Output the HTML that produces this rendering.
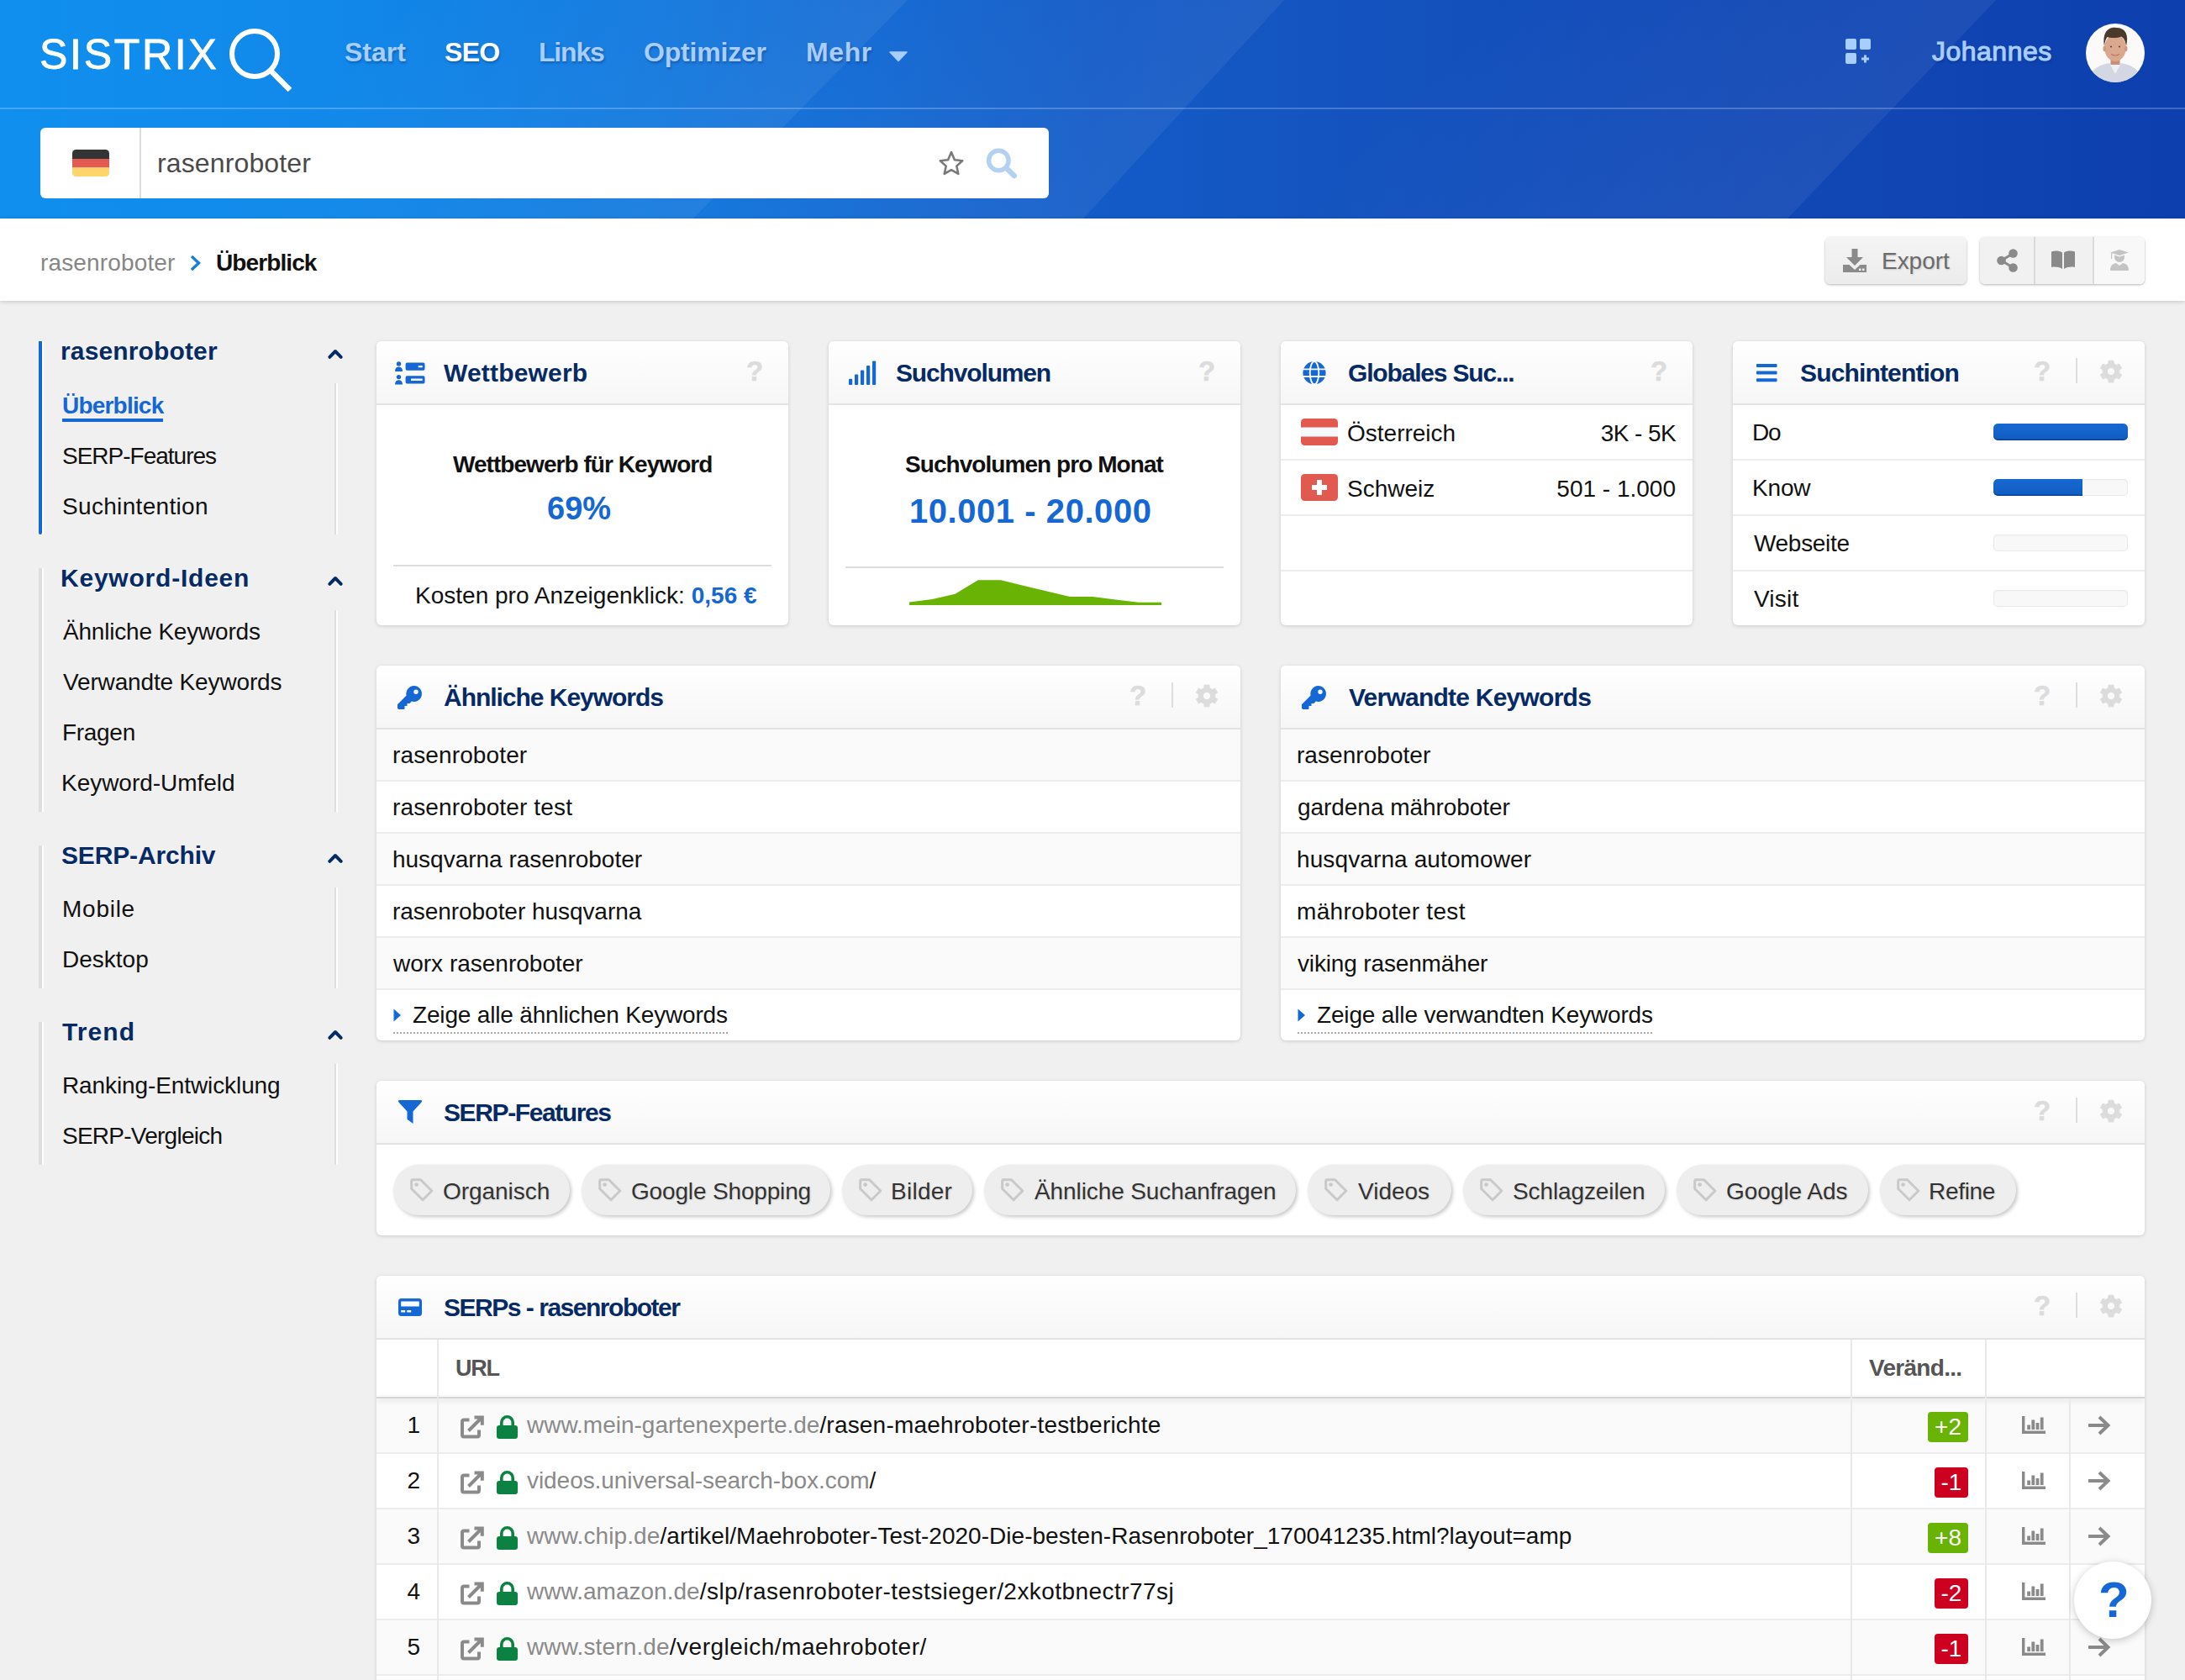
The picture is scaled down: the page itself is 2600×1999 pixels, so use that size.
<!DOCTYPE html>
<html lang="de">
<head>
<meta charset="utf-8">
<title>SISTRIX – rasenroboter – Überblick</title>
<style>
*{box-sizing:border-box;margin:0;padding:0}
html,body{width:2600px;height:1999px;overflow:hidden;background:#f0f0f0}
body{font-family:"Liberation Sans",sans-serif;font-size:28px;color:#111;position:relative}
.a{position:absolute}
.t{position:absolute;white-space:nowrap;line-height:1}
.b{font-weight:bold}
svg{position:absolute;overflow:visible}
/* header */
#hdr{left:0;top:0;width:2600px;height:260px;overflow:hidden;
 background:linear-gradient(90deg,#108fee 0%,#1189ea 15%,#1379de 30%,#1467d1 42%,#135bc7 50%,#1453bf 62%,#1249b6 80%,#0d3fae 100%)}
#hline{left:0;top:128px;width:2600px;height:2px;background:rgba(255,255,255,.22)}
.nav{font-weight:bold;font-size:32px;color:#a8cdff;text-shadow:1px 2px 3px rgba(0,30,90,.35)}
#sbox{left:48px;top:152px;width:1200px;height:84px;background:#fff;border-radius:6px}
#sdiv{left:166px;top:152px;width:2px;height:84px;background:#dcdcdc}
/* crumb */
#crumb{left:0;top:260px;width:2600px;height:98px;background:#fff;box-shadow:0 1px 5px rgba(0,0,0,.18)}
.btn{background:linear-gradient(#f4f4f4,#ececec);border-radius:6px;box-shadow:0 1px 3px rgba(0,0,0,.3)}
/* sidebar */
.sh{font-weight:bold;font-size:30px;color:#062a64;text-shadow:0 1px 0 #fff}
.si{font-size:28px;color:#111}
.gbar{left:46px;width:4px;background:#dedede;box-shadow:2px 0 0 #fff}
.rbar{left:398px;width:2px;background:#dedede;box-shadow:2px 0 0 #fff}
/* cards */
.card{position:absolute;background:#fff;border-radius:6px;box-shadow:0 1px 4px rgba(0,0,0,.16);overflow:hidden}
.ch{position:absolute;left:0;top:0;right:0;height:76px;background:linear-gradient(#ffffff,#f6f6f6);border-bottom:2px solid #e3e3e3}
.ct{font-weight:bold;font-size:30px;color:#062a64}
.q{font-weight:bold;font-size:33px;color:#dcdcdc;-webkit-text-stroke:.6px #dcdcdc}
.vd{width:2px;height:30px;background:#dddddd}
.row{position:absolute;left:0;right:0;border-bottom:2px solid #ececec}
.z{background:#fafafa}
.blue{color:#1567d3}
.dot{height:2px;background:repeating-linear-gradient(90deg,#a8a8a8 0,#a8a8a8 2px,transparent 2px,transparent 4px)}
.tag{height:60px;border-radius:30px;background:#eeeeee;box-shadow:2px 2px 4px rgba(0,0,0,.22);color:#333;text-shadow:1px 1px 2px rgba(0,0,0,.12)}
.bdg{height:36px;line-height:36px;padding:0;text-align:center;width:40px;border-radius:4px;color:#fff;font-size:28px}
.gr{background:#68b304;width:48px}.rd{background:#cd0020}
.bar{width:160px;height:20px;border-radius:5px;background:#f8f8f8;box-shadow:inset 0 0 0 1px #e9e9e9,inset 0 1px 2px rgba(0,0,0,.06);overflow:hidden}
.bar i{display:block;height:20px;background:linear-gradient(#1668d2,#115dc0);border-radius:5px;box-shadow:inset 0 -1.500px 0 rgba(0,40,120,.55)}
</style>
</head>
<body>

<svg width="0" height="0" style="left:0;top:0"><defs>
<symbol id="gear" viewBox="0 0 28 28"><path fill="#dcdcdc" stroke="#dcdcdc" stroke-width="1" stroke-linejoin="round" fill-rule="evenodd" d="M17.22 4.64 L16.97 1.14 L11.03 1.14 L10.78 4.64 L7.51 6.53 L4.35 5.00 L1.38 10.14 L4.28 12.11 L4.28 15.89 L1.38 17.86 L4.35 23.00 L7.51 21.47 L10.78 23.36 L11.03 26.86 L16.97 26.86 L17.22 23.36 L20.49 21.47 L23.65 23.00 L26.62 17.86 L23.72 15.89 L23.72 12.11 L26.62 10.14 L23.65 5.00 L20.49 6.53Z M9.40 14.00a4.6 4.6 0 1 0 9.2 0a4.6 4.6 0 1 0 -9.2 0z"/></symbol>
</defs></svg>
<!-- ================= HEADER ================= -->
<div id="hdr" class="a">
 <svg width="2600" height="260" viewBox="0 0 2600 260" style="left:0;top:0">
  <defs><linearGradient id="g1" gradientUnits="userSpaceOnUse" x1="480" y1="0" x2="792" y2="300"><stop offset="0" stop-color="#fff" stop-opacity="0"/><stop offset="1" stop-color="#fff" stop-opacity=".06"/></linearGradient><linearGradient id="g2" gradientUnits="userSpaceOnUse" x1="928" y1="0" x2="1240" y2="300"><stop offset="0" stop-color="#fff" stop-opacity="0"/><stop offset="1" stop-color="#fff" stop-opacity=".06"/></linearGradient><linearGradient id="g3" gradientUnits="userSpaceOnUse" x1="1775" y1="0" x2="2087" y2="300"><stop offset="0" stop-color="#fff" stop-opacity="0"/><stop offset="1" stop-color="#fff" stop-opacity=".06"/></linearGradient></defs>
  <polygon points="480,0 1080,0 825,260 225,260" fill="url(#g1)"/>
  <polygon points="928,0 1528,0 1289,260 689,260" fill="url(#g2)"/>
  <polygon points="1775,0 2375,0 2127,260 1527,260" fill="url(#g3)"/>
 </svg>
 <div id="hline" class="a"></div>
 <!-- logo -->
 <div class="t" id="logo" style="left:47px;top:40px;font-size:50px;color:#fff;letter-spacing:2.7px;-webkit-text-stroke:0.9px #fff">SISTRIX</div>
 <svg width="80" height="80" viewBox="0 0 80 80" style="left:270px;top:31px">
  <circle cx="33" cy="33" r="27" fill="none" stroke="#fff" stroke-width="6"/>
  <path d="M52 53 L75 76" stroke="#fff" stroke-width="6.5" fill="none"/>
 </svg>
 <!-- nav -->
 <div class="t nav" id="n1" style="left:410px;top:46px">Start</div>
 <div class="t nav" id="n2" style="left:529px;top:46px;color:#fff;letter-spacing:-0.7px">SEO</div>
 <div class="t nav" id="n3" style="left:641px;top:46px;letter-spacing:-1.2px">Links</div>
 <div class="t nav" id="n4" style="left:766px;top:46px;letter-spacing:-0.19px">Optimizer</div>
 <div class="t nav" id="n5" style="left:959px;top:46px;letter-spacing:0.6px">Mehr</div>
 <svg width="22" height="12" viewBox="0 0 22 12" style="left:1058px;top:61px"><path d="M1 1 H21 L11 11.5 Z" fill="#a8cdff" stroke="#a8cdff" stroke-width="1.5" stroke-linejoin="round"/></svg>
 <!-- right -->
 <svg width="30" height="30" viewBox="0 0 30 30" style="left:2196px;top:46px" fill="#a8cdff">
  <rect x="0" y="0" width="13" height="13" rx="2"/><rect x="17" y="0" width="13" height="13" rx="2"/><rect x="0" y="17" width="13" height="13" rx="2"/>
  <path d="M22 19.5h3v3h3v3h-3v3h-3v-3h-3v-3h3z"/>
 </svg>
 <div class="t nav" id="n6" style="left:2299px;top:45px;font-size:32px;letter-spacing:0.49px;font-weight:normal;-webkit-text-stroke:1.100px #a8cdff">Johannes</div>
 <!-- avatar -->
 <svg width="70" height="70" viewBox="0 0 70 70" style="left:2482px;top:28px">
  <defs><clipPath id="av"><circle cx="35" cy="35" r="35"/></clipPath></defs>
  <g clip-path="url(#av)">
   <rect width="70" height="70" fill="#fbfaf9"/>
   <path d="M3 70 C5 53 18 49 28 47 L35 52 L42 47 C52 49 65 53 67 70 Z" fill="#d3d7e3"/>
   <path d="M28 47 L35 60 L42 47 L38 44 H32 Z" fill="#eef0f5"/>
   <rect x="29.500" y="40" width="11" height="9" fill="#c99079"/>
   <ellipse cx="35" cy="29" rx="12.800" ry="16" fill="#d9a88f"/>
   <ellipse cx="22.300" cy="30" rx="1.800" ry="3.200" fill="#cf9a82"/><ellipse cx="47.700" cy="30" rx="1.800" ry="3.200" fill="#cf9a82"/>
   <path d="M22 27 C19 8 29 4 36 5 C47 5 51.500 13 48 27 C47 20 45 17 42 15.500 C37 18 28 17 25.500 16 C23.500 19 22.500 22 22 27 Z" fill="#4b392c"/>
   <path d="M30 36.500 Q35 39.500 40 36.500" fill="none" stroke="#b67763" stroke-width="1.200"/>
   <circle cx="30" cy="27.500" r="1.100" fill="#5a4a44"/><circle cx="40" cy="27.500" r="1.100" fill="#5a4a44"/>
  </g>
 </svg>
 <!-- search box -->
 <div id="sbox" class="a"></div>
 <div id="sdiv" class="a"></div>
 <svg width="44" height="32" viewBox="0 0 44 32" style="left:86px;top:178px">
  <defs><clipPath id="fde"><rect width="44" height="32" rx="4.500"/></clipPath></defs>
  <g clip-path="url(#fde)"><rect width="44" height="11" fill="#343434"/><rect y="11" width="44" height="10.500" fill="#e35a50"/><rect y="21.500" width="44" height="10.500" fill="#fdd56b"/></g>
 </svg>
 <div class="t" id="sq" style="left:187px;top:178px;font-size:32px;color:#4a4a4a;letter-spacing:0.13px">rasenroboter</div>
 <svg width="30" height="29" viewBox="0 0 30 29" style="left:1117px;top:180px"><path d="M15 1 L18.900 10.300 L28.200 11.300 L21.300 17.600 L23.300 26.900 L15 22.200 L6.700 26.900 L8.700 17.600 L1.800 11.300 L11.100 10.300 Z" fill="none" stroke="#7a7a7a" stroke-width="2.600" stroke-linejoin="round"/></svg>
 <svg width="38" height="38" viewBox="0 0 38 38" style="left:1173px;top:176px"><circle cx="15.300" cy="15" r="11.800" fill="none" stroke="#b5d1f2" stroke-width="5.400"/><path d="M24.500 24 L33.700 33" stroke="#b5d1f2" stroke-width="6.500" stroke-linecap="round"/></svg>
</div>

<!-- ================= BREADCRUMB BAR ================= -->
<div id="crumb" class="a"></div>
<div class="t" id="c1" style="left:48px;top:299px;color:#868686;letter-spacing:0.15px">rasenroboter</div>
<svg width="14" height="20" viewBox="0 0 14 20" style="left:226px;top:303px"><path d="M2 2 L10.500 10 L2 18" fill="none" stroke="#1a7fd4" stroke-width="3.400"/></svg>
<div class="t b" id="c2" style="left:257px;top:299px;color:#111;letter-spacing:-0.9px">Überblick</div>
<div class="a btn" style="left:2172px;top:282px;width:168px;height:56px"></div>
<svg width="28" height="28" viewBox="0 0 28 28" style="left:2193px;top:296px" fill="#8a8a8a">
 <path d="M10.500 0h7v10h6.500L14 20 4 10h6.500z"/><path d="M0 19h7.500l6.500 6 6.500-6H28v9H0z"/><rect x="19" y="23.500" width="2.500" height="2.500" fill="#f0f0f0"/><rect x="23" y="23.500" width="2.500" height="2.500" fill="#f0f0f0"/>
</svg>
<div class="t" id="c3" style="left:2239px;top:297px;color:#6b6b6b;text-shadow:1px 1px 2px rgba(0,0,0,.15);letter-spacing:-0.04px">Export</div>
<div class="a btn" style="left:2356px;top:282px;width:196px;height:56px;background:linear-gradient(90deg,#f1f1f1 0,#f1f1f1 134px,#f8f8f8 134px)"></div>
<div class="a" style="left:2420px;top:282px;width:2px;height:56px;background:#dadada"></div>
<div class="a" style="left:2490px;top:282px;width:2px;height:56px;background:#dadada"></div>
<svg width="25" height="28" viewBox="0 0 25 28" style="left:2376px;top:296px"><path d="M5.500 14 L19.500 5.500 M5.500 14 L19.500 22.500" stroke="#8a8a8a" stroke-width="3.200"/><circle cx="5.500" cy="14" r="5.300" fill="#8a8a8a"/><circle cx="19.500" cy="5.500" r="5.300" fill="#8a8a8a"/><circle cx="19.500" cy="22.500" r="5.300" fill="#8a8a8a"/></svg>
<svg width="28" height="22" viewBox="0 0 28 22" style="left:2441px;top:298px" fill="#8a8a8a"><path d="M0 1.500 C4 0 9 0 13 2.500 V22 C9 19.500 4 19 0 20 Z"/><path d="M28 1.500 C24 0 19 0 15 2.500 V22 C19 19.500 24 19 28 20 Z"/></svg>
<svg width="22" height="25" viewBox="0 0 22 25" style="left:2511px;top:297px" fill="#c4c4c4"><path d="M11 0 L22 3.500 L11 7 L0 3.500 Z"/><path d="M5 6.500 V9 a6 6 0 0 0 12 0 V6.500 L11 8.500 Z"/><path d="M0 25 C0 18 4 16.500 7 16 L11 19 L15 16 C18 16.500 22 18 22 25 Z"/><rect x="1" y="4" width="1.200" height="7"/></svg>

<!-- ================= SIDEBAR ================= -->
<div class="a" style="left:46px;top:406px;width:4px;height:230px;background:#1567d3;border-radius:0 0 2px 2px;box-shadow:2px 0 0 #fff"></div>
<div class="a rbar" style="top:456px;height:180px"></div>
<div class="t sh" id="s1" style="left:72px;top:403px;letter-spacing:0.14px">rasenroboter</div>
<div class="t b" id="s2" style="left:74px;top:469px;color:#1567d3;letter-spacing:-0.8px">Überblick</div>
<div class="a" style="left:74px;top:498px;width:120px;height:4px;background:#1567d3"></div>
<div class="t si" id="s3" style="left:74px;top:529px;letter-spacing:-1px">SERP-Features</div>
<div class="t si" id="s4" style="left:74px;top:589px;letter-spacing:0.32px">Suchintention</div>

<div class="a gbar" style="top:676px;height:290px"></div>
<div class="a rbar" style="top:726px;height:240px"></div>
<div class="t sh" id="s5" style="left:72px;top:673px;letter-spacing:0.78px">Keyword-Ideen</div>
<div class="t si" id="s6" style="left:75px;top:738px;letter-spacing:-0.2px">Ähnliche Keywords</div>
<div class="t si" id="s7" style="left:75px;top:798px;letter-spacing:-0.15px">Verwandte Keywords</div>
<div class="t si" id="s8" style="left:74px;top:858px;letter-spacing:-0.3px">Fragen</div>
<div class="t si" id="s9" style="left:73px;top:918px;letter-spacing:-0.03px">Keyword-Umfeld</div>

<div class="a gbar" style="top:1006px;height:170px"></div>
<div class="a rbar" style="top:1056px;height:120px"></div>
<div class="t sh" id="s10" style="left:73px;top:1003px;letter-spacing:-0.15px">SERP-Archiv</div>
<div class="t si" id="s11" style="left:74px;top:1068px;letter-spacing:0.74px">Mobile</div>
<div class="t si" id="s12" style="left:74px;top:1128px">Desktop</div>

<div class="a gbar" style="top:1216px;height:170px"></div>
<div class="a rbar" style="top:1266px;height:120px"></div>
<div class="t sh" id="s13" style="left:74px;top:1213px;letter-spacing:1.1px">Trend</div>
<div class="t si" id="s14" style="left:74px;top:1278px;letter-spacing:-0.1px">Ranking-Entwicklung</div>
<div class="t si" id="s15" style="left:74px;top:1338px;letter-spacing:-0.75px">SERP-Vergleich</div>

<svg width="18" height="12" viewBox="0 0 18 12" style="left:390px;top:415px"><path d="M2.300 11.200 L9 4.500 L15.700 11.200" fill="none" stroke="#fff" stroke-width="4" stroke-linecap="round" stroke-linejoin="round"/><path d="M2.300 9.800 L9 3 L15.700 9.800" fill="none" stroke="#062a64" stroke-width="4" stroke-linecap="round" stroke-linejoin="round"/></svg>
<svg width="18" height="12" viewBox="0 0 18 12" style="left:390px;top:685px"><path d="M2.300 11.200 L9 4.500 L15.700 11.200" fill="none" stroke="#fff" stroke-width="4" stroke-linecap="round" stroke-linejoin="round"/><path d="M2.300 9.800 L9 3 L15.700 9.800" fill="none" stroke="#062a64" stroke-width="4" stroke-linecap="round" stroke-linejoin="round"/></svg>
<svg width="18" height="12" viewBox="0 0 18 12" style="left:390px;top:1015px"><path d="M2.300 11.200 L9 4.500 L15.700 11.200" fill="none" stroke="#fff" stroke-width="4" stroke-linecap="round" stroke-linejoin="round"/><path d="M2.300 9.800 L9 3 L15.700 9.800" fill="none" stroke="#062a64" stroke-width="4" stroke-linecap="round" stroke-linejoin="round"/></svg>
<svg width="18" height="12" viewBox="0 0 18 12" style="left:390px;top:1225px"><path d="M2.300 11.200 L9 4.500 L15.700 11.200" fill="none" stroke="#fff" stroke-width="4" stroke-linecap="round" stroke-linejoin="round"/><path d="M2.300 9.800 L9 3 L15.700 9.800" fill="none" stroke="#062a64" stroke-width="4" stroke-linecap="round" stroke-linejoin="round"/></svg>

<!-- ===== Card 1: Wettbewerb ===== -->
<div class="card" style="left:448px;top:406px;width:490px;height:338px">
 <div class="ch"></div>
 <svg width="36" height="29" viewBox="0 0 36 29" style="left:22px;top:23.500px" fill="#1567d3">
  <circle cx="4.500" cy="2.900" r="2.700"/><path d="M0 11.900C0 8.300 2 6.500 4.500 6.500S9 8.300 9 11.900z"/>
  <circle cx="4.500" cy="18.600" r="2.700"/><path d="M0 27.600C0 24 2 22.200 4.500 22.200S9 24 9 27.600z"/>
  <path d="M14.300 1.600h19.500a1.700 1.700 0 0 1 1.700 1.700v5.800a1.700 1.700 0 0 1-1.700 1.700H14.300a1.700 1.700 0 0 1-1.700-1.700V3.300a1.700 1.700 0 0 1 1.700-1.700z M27.700 4.900v2.400h5V4.900z" fill-rule="evenodd"/>
  <path d="M14.300 17.200h19.500a1.700 1.700 0 0 1 1.700 1.700v5.800a1.700 1.700 0 0 1-1.700 1.700H14.300a1.700 1.700 0 0 1-1.700-1.700v-5.800a1.700 1.700 0 0 1 1.700-1.700z M19 20.600v2.400h13.700v-2.400z" fill-rule="evenodd"/>
 </svg>
 <div class="t ct" id="k1" style="left:80px;top:23px;letter-spacing:0.19px">Wettbewerb</div>
 <div class="t q" id="q1" style="left:440px;top:18.500px">?</div>
 <div class="t b" id="k1a" style="left:91px;top:133px;letter-spacing:-0.95px">Wettbewerb für Keyword</div>
 <div class="t b blue" id="k1b" style="left:203px;top:180px;font-size:38px">69%</div>
 <div class="a" style="left:20px;top:266px;width:450px;height:2px;background:#dcdcdc"></div>
 <div class="t" id="k1c" style="left:46px;top:289px;letter-spacing:0.01px">Kosten pro Anzeigenklick: <span class="b blue" id="k1d">0,56 €</span></div>
</div>

<!-- ===== Card 2: Suchvolumen ===== -->
<div class="card" style="left:986px;top:406px;width:490px;height:338px">
 <div class="ch"></div>
 <svg width="33" height="28" viewBox="0 0 33 28" style="left:24px;top:24px" fill="#1567d3">
  <rect x="0" y="20.700" width="4.200" height="7.300" rx="1"/><rect x="7" y="15.400" width="4.200" height="12.600" rx="1"/><rect x="14" y="10.400" width="4.200" height="17.600" rx="1"/><rect x="21" y="5.100" width="4.200" height="22.900" rx="1"/><rect x="28" y="-0.400" width="4.200" height="28.400" rx="1"/>
 </svg>
 <div class="t ct" id="k2" style="left:80px;top:23px;letter-spacing:-1.15px">Suchvolumen</div>
 <div class="t q" id="q2" style="left:440px;top:18.500px">?</div>
 <div class="t b" id="k2a" style="left:91px;top:133px;letter-spacing:-0.94px">Suchvolumen pro Monat</div>
 <div class="t b blue" id="k2b" style="left:96px;top:182px;font-size:40px;letter-spacing:0.55px">10.001 - 20.000</div>
 <div class="a" style="left:20px;top:268px;width:450px;height:2px;background:#dcdcdc"></div>
 <svg width="300" height="30" viewBox="0 0 300 30" style="left:96px;top:284px"><path d="M0 30 V26.400 L27.300 23 L54.500 16.700 L81.800 0.300 H109 L136.400 7 L163.600 13.500 L190.900 20 H218.200 L245.500 23.400 L272.700 26.700 H300 V30 Z" fill="#68b304"/></svg>
</div>

<!-- ===== Card 3: Globales Suchvolumen ===== -->
<div class="card" style="left:1524px;top:406px;width:490px;height:338px">
 <div class="ch"></div>
 <svg width="28" height="28" viewBox="0 0 28 28" style="left:26px;top:24px">
  <circle cx="14" cy="13.700" r="13.600" fill="#1567d3"/>
  <g fill="none" stroke="#fafafa" stroke-width="1.900"><ellipse cx="14" cy="13.700" rx="5.300" ry="13.600"/><path d="M0 9.400H28M0 18H28"/></g>
 </svg>
 <div class="t ct" id="k3" style="left:80px;top:23px;letter-spacing:-1.17px">Globales Suc...</div>
 <div class="t q" id="q3" style="left:440px;top:18.500px">?</div>
 <div class="row" style="top:76px;height:66px"></div>
 <div class="row" style="top:142px;height:66px"></div>
 <div class="row" style="top:208px;height:66px"></div>
 <svg width="44" height="32" viewBox="0 0 44 32" style="left:24px;top:92px"><defs><clipPath id="fat"><rect width="44" height="32" rx="4.500"/></clipPath></defs><g clip-path="url(#fat)"><rect width="44" height="32" fill="#e25950"/><rect y="10.500" width="44" height="11" fill="#f6f9fc"/></g></svg>
 <svg width="44" height="32" viewBox="0 0 44 32" style="left:24px;top:158px"><rect width="44" height="32" rx="4.500" fill="#e25950"/><path d="M19 7h6v6h6v6h-6v6h-6v-6h-6v-6h6z" fill="#fff"/></svg>
 <div class="t" id="k3a" style="left:79px;top:96px">Österreich</div>
 <div class="t" id="k3b" style="right:20px;top:96px;letter-spacing:-0.6px">3K - 5K</div>
 <div class="t" id="k3c" style="left:79px;top:162px">Schweiz</div>
 <div class="t" id="k3d" style="right:20px;top:162px">501 - 1.000</div>
</div>

<!-- ===== Card 4: Suchintention ===== -->
<div class="card" style="left:2062px;top:406px;width:490px;height:338px">
 <div class="ch"></div>
 <svg width="25" height="22" viewBox="0 0 25 22" style="left:28px;top:26.500px" fill="#1567d3"><rect y="0" width="24.500" height="4" rx=".8"/><rect y="8.600" width="24.500" height="4" rx=".8"/><rect y="17.200" width="24.500" height="4" rx=".8"/></svg>
 <div class="t ct" id="k4" style="left:80px;top:23px;letter-spacing:-0.84px">Suchintention</div>
 <div class="t q" id="q4" style="left:358px;top:18.500px">?</div>
 <div class="a vd" style="left:408px;top:20px"></div>
 <svg class="gear" width="28" height="28" viewBox="0 0 28 28" style="left:436px;top:21.500px"><use href="#gear"/></svg>
 <div class="row" style="top:76px;height:66px"></div>
 <div class="row" style="top:142px;height:66px"></div>
 <div class="row" style="top:208px;height:66px"></div>
 <div class="t" id="k4a" style="left:23px;top:95px;letter-spacing:-1.3px">Do</div>
 <div class="t" id="k4b" style="left:23px;top:161px;letter-spacing:-0.17px">Know</div>
 <div class="t" id="k4c" style="left:25px;top:227px;letter-spacing:-0.31px">Webseite</div>
 <div class="t" id="k4d" style="left:25px;top:293px;letter-spacing:0.2px">Visit</div>
 <div class="a bar" style="left:310px;top:98px"><i style="width:100%"></i></div>
 <div class="a bar" style="left:310px;top:164px"><i style="width:66.500%;border-radius:5px 0 0 5px"></i></div>
 <div class="a bar" style="left:310px;top:230px"></div>
 <div class="a bar" style="left:310px;top:296px"></div>
</div>

<!-- ===== Row 2 ===== -->
<div class="card" style="left:448px;top:792px;width:1028px;height:446px">
 <div class="ch"></div>
 <svg width="29" height="28" viewBox="0 0 29 28" style="left:25px;top:24px"><path fill="#1567d3" fill-rule="evenodd" d="M19.500 0a9.500 9.500 0 1 1-2.800 18.600L14.500 21h-3v3h-3v3.200L7.700 28H1.200L0 26.800v-4.600L10.600 11.600A9.500 9.500 0 0 1 19.500 0z M22 4.600a2.700 2.700 0 1 0 0 5.400 2.700 2.700 0 0 0 0-5.400z"/></svg>
 <div class="t ct" id="k5" style="left:80px;top:23px;letter-spacing:-1.03px">Ähnliche Keywords</div>
 <div class="t q" style="left:896px;top:18.500px">?</div><div class="a vd" style="left:946px;top:20px"></div><svg width="28" height="28" viewBox="0 0 28 28" style="left:974px;top:21.500px"><use href="#gear"/></svg>
 <div class="row z" style="top:76px;height:62px"><div class="t" id="r0" style="left:19px;top:17px;letter-spacing:0.13px">rasenroboter</div></div>
 <div class="row" style="top:138px;height:62px"><div class="t" id="r1" style="left:19px;top:17px;letter-spacing:0.14px">rasenroboter test</div></div>
 <div class="row z" style="top:200px;height:62px"><div class="t" id="r2" style="left:19px;top:17px;letter-spacing:-0.01px">husqvarna rasenroboter</div></div>
 <div class="row" style="top:262px;height:62px"><div class="t" id="r3" style="left:19px;top:17px;letter-spacing:-0.05px">rasenroboter husqvarna</div></div>
 <div class="row z" style="top:324px;height:62px"><div class="t" id="r4" style="left:20px;top:17px">worx rasenroboter</div></div>
 <svg width="10" height="16" viewBox="0 0 10 16" style="left:20px;top:408px"><path d="M0.500 0.500 L9 8 L0.500 15.500 Z" fill="#1567d3"/></svg>
 <div class="t" id="k5l" style="left:43px;top:402px;letter-spacing:-0.17px">Zeige alle ähnlichen Keywords</div>
 <div class="a dot" id="k5lu" style="left:20px;top:436px;width:398px"></div>
</div>
<div class="card" style="left:1524px;top:792px;width:1028px;height:446px">
 <div class="ch"></div>
 <svg width="29" height="28" viewBox="0 0 29 28" style="left:25px;top:24px"><path fill="#1567d3" fill-rule="evenodd" d="M19.500 0a9.500 9.500 0 1 1-2.800 18.600L14.500 21h-3v3h-3v3.200L7.700 28H1.200L0 26.800v-4.600L10.600 11.600A9.500 9.500 0 0 1 19.500 0z M22 4.600a2.700 2.700 0 1 0 0 5.400 2.700 2.700 0 0 0 0-5.400z"/></svg>
 <div class="t ct" id="k6" style="left:81px;top:23px;letter-spacing:-0.76px">Verwandte Keywords</div>
 <div class="t q" style="left:896px;top:18.500px">?</div><div class="a vd" style="left:946px;top:20px"></div><svg width="28" height="28" viewBox="0 0 28 28" style="left:974px;top:21.500px"><use href="#gear"/></svg>
 <div class="row z" style="top:76px;height:62px"><div class="t" id="r5" style="left:19px;top:17px;letter-spacing:0.05px">rasenroboter</div></div>
 <div class="row" style="top:138px;height:62px"><div class="t" id="r6" style="left:20px;top:17px;letter-spacing:-0.05px">gardena mähroboter</div></div>
 <div class="row z" style="top:200px;height:62px"><div class="t" id="r7" style="left:19px;top:17px;letter-spacing:0.11px">husqvarna automower</div></div>
 <div class="row" style="top:262px;height:62px"><div class="t" id="r8" style="left:19px;top:17px;letter-spacing:0.31px">mähroboter test</div></div>
 <div class="row z" style="top:324px;height:62px"><div class="t" id="r9" style="left:20px;top:17px;letter-spacing:-0.15px">viking rasenmäher</div></div>
 <svg width="10" height="16" viewBox="0 0 10 16" style="left:20px;top:408px"><path d="M0.500 0.500 L9 8 L0.500 15.500 Z" fill="#1567d3"/></svg>
 <div class="t" id="k6l" style="left:43px;top:402px;letter-spacing:-0.16px">Zeige alle verwandten Keywords</div>
 <div class="a dot" id="k6lu" style="left:20px;top:436px;width:424px"></div>
</div>
<!-- ===== SERP-Features ===== -->
<div class="card" style="left:448px;top:1286px;width:2104px;height:184px">
 <div class="ch"></div>
 <svg width="28" height="28" viewBox="0 0 28 28" style="left:26px;top:23px"><path d="M1.300 0h25.400a1.300 1.300 0 0 1 1 2.200L17.500 13.500V28l-7-5.200v-9.300L.3 2.200A1.300 1.300 0 0 1 1.300 0z" fill="#1567d3"/></svg>
 <div class="t ct" id="k7" style="left:80px;top:23px;letter-spacing:-1.39px">SERP-Features</div>
 <div class="t q" style="left:1972px;top:18.500px">?</div><div class="a vd" style="left:2022px;top:20px"></div><svg width="28" height="28" viewBox="0 0 28 28" style="left:2050px;top:21.500px"><use href="#gear"/></svg>
 <div class="a tag" style="left:20px;top:100px;width:210px"><svg width="28" height="28" viewBox="0 0 28 28" style="left:20px;top:16px"><path d="M1.700 3.200 a1.500 1.500 0 0 1 1.500-1.500 H12.500 L25.800 15 L15 25.800 L1.700 12.500 Z" fill="none" stroke="#c9c9c9" stroke-width="3" stroke-linejoin="round"/><circle cx="7.600" cy="7.600" r="2.400" fill="#c9c9c9"/></svg><div class="t" id="tg0" style="left:59px;top:18px;letter-spacing:-0.05px">Organisch</div></div>
 <div class="a tag" style="left:244px;top:100px;width:296px"><svg width="28" height="28" viewBox="0 0 28 28" style="left:20px;top:16px"><path d="M1.700 3.200 a1.500 1.500 0 0 1 1.500-1.500 H12.500 L25.800 15 L15 25.800 L1.700 12.500 Z" fill="none" stroke="#c9c9c9" stroke-width="3" stroke-linejoin="round"/><circle cx="7.600" cy="7.600" r="2.400" fill="#c9c9c9"/></svg><div class="t" id="tg1" style="left:59px;top:18px;letter-spacing:-0.16px">Google Shopping</div></div>
 <div class="a tag" style="left:554px;top:100px;width:155px"><svg width="28" height="28" viewBox="0 0 28 28" style="left:20px;top:16px"><path d="M1.700 3.200 a1.500 1.500 0 0 1 1.500-1.500 H12.500 L25.800 15 L15 25.800 L1.700 12.500 Z" fill="none" stroke="#c9c9c9" stroke-width="3" stroke-linejoin="round"/><circle cx="7.600" cy="7.600" r="2.400" fill="#c9c9c9"/></svg><div class="t" id="tg2" style="left:58px;top:18px;letter-spacing:0.26px">Bilder</div></div>
 <div class="a tag" style="left:723px;top:100px;width:371px"><svg width="28" height="28" viewBox="0 0 28 28" style="left:20px;top:16px"><path d="M1.700 3.200 a1.500 1.500 0 0 1 1.500-1.500 H12.500 L25.800 15 L15 25.800 L1.700 12.500 Z" fill="none" stroke="#c9c9c9" stroke-width="3" stroke-linejoin="round"/><circle cx="7.600" cy="7.600" r="2.400" fill="#c9c9c9"/></svg><div class="t" id="tg3" style="left:60px;top:18px;letter-spacing:-0.1px">Ähnliche Suchanfragen</div></div>
 <div class="a tag" style="left:1108px;top:100px;width:171px"><svg width="28" height="28" viewBox="0 0 28 28" style="left:20px;top:16px"><path d="M1.700 3.200 a1.500 1.500 0 0 1 1.500-1.500 H12.500 L25.800 15 L15 25.800 L1.700 12.500 Z" fill="none" stroke="#c9c9c9" stroke-width="3" stroke-linejoin="round"/><circle cx="7.600" cy="7.600" r="2.400" fill="#c9c9c9"/></svg><div class="t" id="tg4" style="left:60px;top:18px">Videos</div></div>
 <div class="a tag" style="left:1293px;top:100px;width:240px"><svg width="28" height="28" viewBox="0 0 28 28" style="left:20px;top:16px"><path d="M1.700 3.200 a1.500 1.500 0 0 1 1.500-1.500 H12.500 L25.800 15 L15 25.800 L1.700 12.500 Z" fill="none" stroke="#c9c9c9" stroke-width="3" stroke-linejoin="round"/><circle cx="7.600" cy="7.600" r="2.400" fill="#c9c9c9"/></svg><div class="t" id="tg5" style="left:59px;top:18px;letter-spacing:-0.11px">Schlagzeilen</div></div>
 <div class="a tag" style="left:1547px;top:100px;width:228px"><svg width="28" height="28" viewBox="0 0 28 28" style="left:20px;top:16px"><path d="M1.700 3.200 a1.500 1.500 0 0 1 1.500-1.500 H12.500 L25.800 15 L15 25.800 L1.700 12.500 Z" fill="none" stroke="#c9c9c9" stroke-width="3" stroke-linejoin="round"/><circle cx="7.600" cy="7.600" r="2.400" fill="#c9c9c9"/></svg><div class="t" id="tg6" style="left:59px;top:18px;letter-spacing:-0.03px">Google Ads</div></div>
 <div class="a tag" style="left:1789px;top:100px;width:162px"><svg width="28" height="28" viewBox="0 0 28 28" style="left:20px;top:16px"><path d="M1.700 3.200 a1.500 1.500 0 0 1 1.500-1.500 H12.500 L25.800 15 L15 25.800 L1.700 12.500 Z" fill="none" stroke="#c9c9c9" stroke-width="3" stroke-linejoin="round"/><circle cx="7.600" cy="7.600" r="2.400" fill="#c9c9c9"/></svg><div class="t" id="tg7" style="left:58px;top:18px;letter-spacing:-0.3px">Refine</div></div>
</div>
<!-- ===== SERPs ===== -->
<div class="card" style="left:448px;top:1518px;width:2104px;height:520px">
 <div class="ch"></div>
 <svg width="28" height="21" viewBox="0 0 28 21" style="left:26px;top:27px"><path fill="#1567d3" fill-rule="evenodd" d="M3.500 0h21A3.500 3.500 0 0 1 28 3.500v14a3.500 3.500 0 0 1-3.500 3.500h-21A3.500 3.500 0 0 1 0 17.500v-14A3.500 3.500 0 0 1 3.500 0z M3.200 3.600v6h21.600v-6z M3.200 14v2.600h5V14z M10.200 14v2.600h5V14z"/></svg>
 <div class="t ct" id="k8" style="left:80px;top:23px;letter-spacing:-1.48px">SERPs - rasenroboter</div>
 <div class="t q" style="left:1972px;top:18.500px">?</div><div class="a vd" style="left:2022px;top:20px"></div><svg width="28" height="28" viewBox="0 0 28 28" style="left:2050px;top:21.500px"><use href="#gear"/></svg>
 <div class="a" style="left:0;top:76px;width:2104px;height:68px;background:#fff"></div>
 <div class="t b" id="th1" style="left:94px;top:97px;color:#555;font-size:27px;letter-spacing:-1.2px">URL</div>
 <div class="t b" id="th2" style="left:1776px;top:96px;color:#555;letter-spacing:-0.7px">Veränd...</div>
 <div class="row z" style="top:146px;height:66px"><div class="t" style="right:2052px;top:18px">1</div><svg width="29" height="29" viewBox="0 0 29 29" style="left:100px;top:20px" fill="none" stroke="#8a8a8a" stroke-width="4"><path d="M22 17.500V23.400a2 2 0 0 1-2 2H4a2 2 0 0 1-2-2V7.400a2 2 0 0 1 2-2h6.500"/><path d="M9.500 18.500L25.500 2.500M16.500 2.400H25.800V11.700"/></svg><svg width="25" height="28" viewBox="0 0 25 28" style="left:143px;top:20px"><path d="M5.800 13V8.500a6.700 6.700 0 0 1 13.400 0V13" fill="none" stroke="#0c8242" stroke-width="3.600"/><rect x="0" y="12" width="25" height="16" rx="3" fill="#0c8242"/></svg><div class="t" id="u0" style="left:179px;top:18px"><span id="d0" style="color:#8a8a8a;letter-spacing:-0.01px">www.mein-gartenexperte.de</span><span id="p0" style="letter-spacing:0.2px">/rasen-maehroboter-testberichte</span></div><div class="a bdg gr" style="right:210px;top:16px">+2</div><svg width="28" height="21" viewBox="0 0 28 21" style="left:1958px;top:21px" fill="#8a8a8a"><path d="M0 0h3.400v17.600H28V21H0z"/><rect x="6.200" y="10.500" width="3.800" height="5.500"/><rect x="11.400" y="4.500" width="3.800" height="11.500"/><rect x="16.600" y="8" width="3.800" height="8"/><rect x="21.800" y="1.500" width="3.800" height="14.500"/></svg><svg width="26" height="24" viewBox="0 0 26 24" style="left:2037px;top:20px" fill="none" stroke="#8a8a8a" stroke-width="4"><path d="M0 12H22.500"/><path d="M13 2L23.500 12L13 22"/></svg></div>
 <div class="row" style="top:212px;height:66px"><div class="t" style="right:2052px;top:18px">2</div><svg width="29" height="29" viewBox="0 0 29 29" style="left:100px;top:20px" fill="none" stroke="#8a8a8a" stroke-width="4"><path d="M22 17.500V23.400a2 2 0 0 1-2 2H4a2 2 0 0 1-2-2V7.400a2 2 0 0 1 2-2h6.500"/><path d="M9.500 18.500L25.500 2.500M16.500 2.400H25.800V11.700"/></svg><svg width="25" height="28" viewBox="0 0 25 28" style="left:143px;top:20px"><path d="M5.800 13V8.500a6.700 6.700 0 0 1 13.400 0V13" fill="none" stroke="#0c8242" stroke-width="3.600"/><rect x="0" y="12" width="25" height="16" rx="3" fill="#0c8242"/></svg><div class="t" id="u1" style="left:179px;top:18px"><span id="d1" style="color:#8a8a8a;letter-spacing:-0.06px">videos.universal-search-box.com</span><span id="p1" style="letter-spacing:0px">/</span></div><div class="a bdg rd" style="right:210px;top:16px">-1</div><svg width="28" height="21" viewBox="0 0 28 21" style="left:1958px;top:21px" fill="#8a8a8a"><path d="M0 0h3.400v17.600H28V21H0z"/><rect x="6.200" y="10.500" width="3.800" height="5.500"/><rect x="11.400" y="4.500" width="3.800" height="11.500"/><rect x="16.600" y="8" width="3.800" height="8"/><rect x="21.800" y="1.500" width="3.800" height="14.500"/></svg><svg width="26" height="24" viewBox="0 0 26 24" style="left:2037px;top:20px" fill="none" stroke="#8a8a8a" stroke-width="4"><path d="M0 12H22.500"/><path d="M13 2L23.500 12L13 22"/></svg></div>
 <div class="row z" style="top:278px;height:66px"><div class="t" style="right:2052px;top:18px">3</div><svg width="29" height="29" viewBox="0 0 29 29" style="left:100px;top:20px" fill="none" stroke="#8a8a8a" stroke-width="4"><path d="M22 17.500V23.400a2 2 0 0 1-2 2H4a2 2 0 0 1-2-2V7.400a2 2 0 0 1 2-2h6.500"/><path d="M9.500 18.500L25.500 2.500M16.500 2.400H25.800V11.700"/></svg><svg width="25" height="28" viewBox="0 0 25 28" style="left:143px;top:20px"><path d="M5.800 13V8.500a6.700 6.700 0 0 1 13.400 0V13" fill="none" stroke="#0c8242" stroke-width="3.600"/><rect x="0" y="12" width="25" height="16" rx="3" fill="#0c8242"/></svg><div class="t" id="u2" style="left:179px;top:18px"><span id="d2" style="color:#8a8a8a;letter-spacing:0.12px">www.chip.de</span><span id="p2" style="letter-spacing:0.03px">/artikel/Maehroboter-Test-2020-Die-besten-Rasenroboter_170041235.html?layout=amp</span></div><div class="a bdg gr" style="right:210px;top:16px">+8</div><svg width="28" height="21" viewBox="0 0 28 21" style="left:1958px;top:21px" fill="#8a8a8a"><path d="M0 0h3.400v17.600H28V21H0z"/><rect x="6.200" y="10.500" width="3.800" height="5.500"/><rect x="11.400" y="4.500" width="3.800" height="11.500"/><rect x="16.600" y="8" width="3.800" height="8"/><rect x="21.800" y="1.500" width="3.800" height="14.500"/></svg><svg width="26" height="24" viewBox="0 0 26 24" style="left:2037px;top:20px" fill="none" stroke="#8a8a8a" stroke-width="4"><path d="M0 12H22.500"/><path d="M13 2L23.500 12L13 22"/></svg></div>
 <div class="row" style="top:344px;height:66px"><div class="t" style="right:2052px;top:18px">4</div><svg width="29" height="29" viewBox="0 0 29 29" style="left:100px;top:20px" fill="none" stroke="#8a8a8a" stroke-width="4"><path d="M22 17.500V23.400a2 2 0 0 1-2 2H4a2 2 0 0 1-2-2V7.400a2 2 0 0 1 2-2h6.500"/><path d="M9.500 18.500L25.500 2.500M16.500 2.400H25.800V11.700"/></svg><svg width="25" height="28" viewBox="0 0 25 28" style="left:143px;top:20px"><path d="M5.800 13V8.500a6.700 6.700 0 0 1 13.400 0V13" fill="none" stroke="#0c8242" stroke-width="3.600"/><rect x="0" y="12" width="25" height="16" rx="3" fill="#0c8242"/></svg><div class="t" id="u3" style="left:179px;top:18px"><span id="d3" style="color:#8a8a8a;letter-spacing:0.02px">www.amazon.de</span><span id="p3" style="letter-spacing:0.45px">/slp/rasenroboter-testsieger/2xkotbnectr77sj</span></div><div class="a bdg rd" style="right:210px;top:16px">-2</div><svg width="28" height="21" viewBox="0 0 28 21" style="left:1958px;top:21px" fill="#8a8a8a"><path d="M0 0h3.400v17.600H28V21H0z"/><rect x="6.200" y="10.500" width="3.800" height="5.500"/><rect x="11.400" y="4.500" width="3.800" height="11.500"/><rect x="16.600" y="8" width="3.800" height="8"/><rect x="21.800" y="1.500" width="3.800" height="14.500"/></svg><svg width="26" height="24" viewBox="0 0 26 24" style="left:2037px;top:20px" fill="none" stroke="#8a8a8a" stroke-width="4"><path d="M0 12H22.500"/><path d="M13 2L23.500 12L13 22"/></svg></div>
 <div class="row z" style="top:410px;height:66px"><div class="t" style="right:2052px;top:18px">5</div><svg width="29" height="29" viewBox="0 0 29 29" style="left:100px;top:20px" fill="none" stroke="#8a8a8a" stroke-width="4"><path d="M22 17.500V23.400a2 2 0 0 1-2 2H4a2 2 0 0 1-2-2V7.400a2 2 0 0 1 2-2h6.500"/><path d="M9.500 18.500L25.500 2.500M16.500 2.400H25.800V11.700"/></svg><svg width="25" height="28" viewBox="0 0 25 28" style="left:143px;top:20px"><path d="M5.800 13V8.500a6.700 6.700 0 0 1 13.400 0V13" fill="none" stroke="#0c8242" stroke-width="3.600"/><rect x="0" y="12" width="25" height="16" rx="3" fill="#0c8242"/></svg><div class="t" id="u4" style="left:179px;top:18px"><span id="d4" style="color:#8a8a8a;letter-spacing:0.14px">www.stern.de</span><span id="p4" style="letter-spacing:0.52px">/vergleich/maehroboter/</span></div><div class="a bdg rd" style="right:210px;top:16px">-1</div><svg width="28" height="21" viewBox="0 0 28 21" style="left:1958px;top:21px" fill="#8a8a8a"><path d="M0 0h3.400v17.600H28V21H0z"/><rect x="6.200" y="10.500" width="3.800" height="5.500"/><rect x="11.400" y="4.500" width="3.800" height="11.500"/><rect x="16.600" y="8" width="3.800" height="8"/><rect x="21.800" y="1.500" width="3.800" height="14.500"/></svg><svg width="26" height="24" viewBox="0 0 26 24" style="left:2037px;top:20px" fill="none" stroke="#8a8a8a" stroke-width="4"><path d="M0 12H22.500"/><path d="M13 2L23.500 12L13 22"/></svg></div>
 <div class="row" style="top:476px;height:66px"><div class="t" style="right:2052px;top:18px">6</div><svg width="29" height="29" viewBox="0 0 29 29" style="left:100px;top:20px" fill="none" stroke="#8a8a8a" stroke-width="4"><path d="M22 17.500V23.400a2 2 0 0 1-2 2H4a2 2 0 0 1-2-2V7.400a2 2 0 0 1 2-2h6.500"/><path d="M9.500 18.500L25.500 2.500M16.500 2.400H25.800V11.700"/></svg><svg width="25" height="28" viewBox="0 0 25 28" style="left:143px;top:20px"><path d="M5.800 13V8.500a6.700 6.700 0 0 1 13.400 0V13" fill="none" stroke="#0c8242" stroke-width="3.600"/><rect x="0" y="12" width="25" height="16" rx="3" fill="#0c8242"/></svg><div class="t" id="u5" style="left:179px;top:18px"><span id="d5" style="color:#8a8a8a">www.gartentipps.com</span><span id="p5">/rasenroboter-test.html</span></div><div class="a bdg gr" style="right:210px;top:16px">+1</div><svg width="28" height="21" viewBox="0 0 28 21" style="left:1958px;top:21px" fill="#8a8a8a"><path d="M0 0h3.400v17.600H28V21H0z"/><rect x="6.200" y="10.500" width="3.800" height="5.500"/><rect x="11.400" y="4.500" width="3.800" height="11.500"/><rect x="16.600" y="8" width="3.800" height="8"/><rect x="21.800" y="1.500" width="3.800" height="14.500"/></svg><svg width="26" height="24" viewBox="0 0 26 24" style="left:2037px;top:20px" fill="none" stroke="#8a8a8a" stroke-width="4"><path d="M0 12H22.500"/><path d="M13 2L23.500 12L13 22"/></svg></div>
 <div class="a" style="left:0;top:144px;width:2104px;height:2px;background:#d6d6d6;box-shadow:0 2px 7px rgba(0,0,0,.2)"></div>
 <div class="a" style="left:72px;top:76px;width:2px;height:500px;background:#e9e9e9"></div>
 <div class="a" style="left:1754px;top:76px;width:2px;height:500px;background:#e9e9e9"></div>
 <div class="a" style="left:1914px;top:76px;width:2px;height:500px;background:#e9e9e9"></div>
 <div class="a" style="left:2014px;top:146px;width:2px;height:500px;background:#e9e9e9"></div>
</div>
<!-- help bubble -->
<div class="a" style="left:2468px;top:1858px;width:92px;height:92px;border-radius:50%;background:#fff;box-shadow:0 2px 10px rgba(0,0,0,.22)"></div>
<div class="t b" id="hb" style="left:2497px;top:1874px;font-size:60px;color:#1567d3">?</div>

</body>
</html>
